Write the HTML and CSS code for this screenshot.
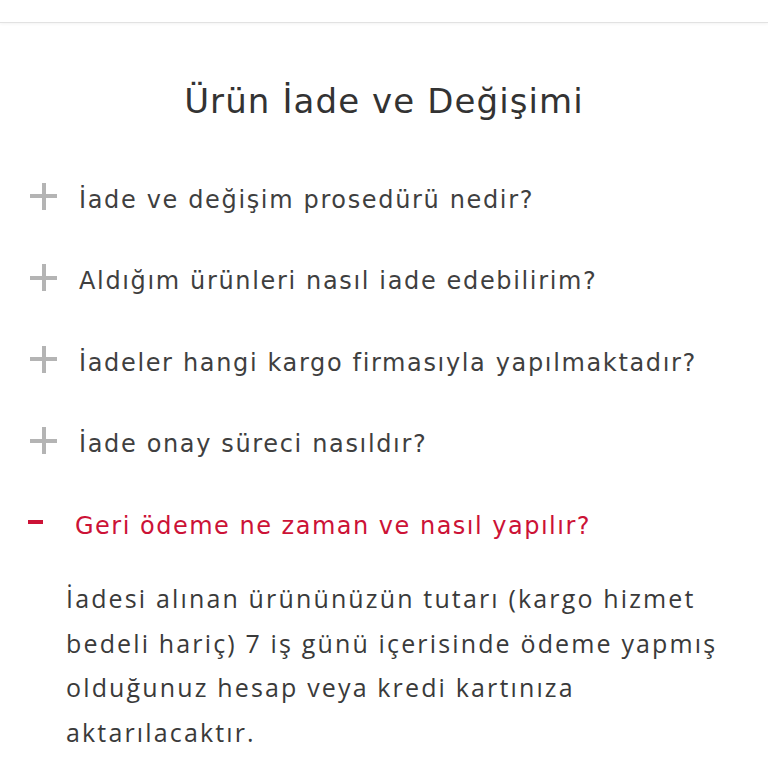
FILE: index.html
```html
<!DOCTYPE html>
<html lang="tr">
<head>
<meta charset="utf-8">
<title>Ürün İade ve Değişimi</title>
<link rel="stylesheet" href="styles.css">
</head>
<body>
<header class="topbar"></header>
<main class="faq">
  <h1 class="faq-title">Ürün İade ve Değişimi</h1>
  <ul class="faq-list">
    <li class="faq-item">
      <div class="q"><span class="icon plus"></span><span class="q-text">İade ve değişim prosedürü nedir?</span></div>
    </li>
    <li class="faq-item">
      <div class="q"><span class="icon plus"></span><span class="q-text">Aldığım ürünleri nasıl iade edebilirim?</span></div>
    </li>
    <li class="faq-item">
      <div class="q"><span class="icon plus"></span><span class="q-text">İadeler hangi kargo firmasıyla yapılmaktadır?</span></div>
    </li>
    <li class="faq-item">
      <div class="q"><span class="icon plus"></span><span class="q-text">İade onay süreci nasıldır?</span></div>
    </li>
    <li class="faq-item is-open">
      <div class="q"><span class="icon minus"></span><span class="q-text">Geri ödeme ne zaman ve nasıl yapılır?</span></div>
      <p class="answer">İadesi alınan ürününüzün tutarı (kargo hizmet bedeli hariç) 7 iş günü içerisinde ödeme yapmış olduğunuz hesap veya kredi kartınıza aktarılacaktır.</p>
    </li>
  </ul>
</main>
</body>
</html>
```
FILE: styles.css
```css
* { box-sizing: border-box; }
html, body { margin: 0; padding: 0; background: #ffffff; }
body { font-family: "DejaVu Sans", sans-serif; color: #3b3b3b; }

.topbar {
  height: 23px;
  border-bottom: 1px solid #e2e2e2;
  box-shadow: 0 1px 3px rgba(0, 0, 0, 0.05);
}

.faq { display: flex; flex-direction: column; }

.faq-title {
  margin: 58px 0 0;
  font-family: "DejaVu Sans", sans-serif;
  font-weight: 400;
  font-size: 34px;
  line-height: 40px;
  letter-spacing: 1.1px;
  color: #333333;
  text-align: center;
}

.faq-list {
  list-style: none;
  margin: 61.7px 0 0;
  padding: 0;
  display: flex;
  flex-direction: column;
  gap: 47.5px;
}

.q {
  display: flex;
  align-items: center;
  gap: 22px;
  padding-left: 30px;
  height: 34px;
}

.q-text {
  font-size: 24px;
  line-height: 34px;
  letter-spacing: 1.65px;
  color: #3f3f3f;
  white-space: nowrap;
}

.icon {
  position: relative;
  flex: 0 0 27px;
  width: 27px;
  height: 27px;
  margin-bottom: 7px;
}

.plus::before,
.plus::after {
  content: "";
  position: absolute;
  background: #b4b4b4;
}
.plus::before { left: 0; right: 0; top: 11.5px; height: 4px; }
.plus::after { top: 0; bottom: 0; left: 11.5px; width: 4px; }

.minus::before {
  content: "";
  position: absolute;
  left: -2px;
  width: 15px;
  top: 11.5px;
  height: 4px;
  background: #cc1236;
}

.is-open .q { gap: 18px; }
.is-open .q-text { color: #cc1236; letter-spacing: 1.5px; }

.answer {
  margin: 33.7px 0 0;
  padding: 0 28px 0 66px;
  font-family: "Open Sans", sans-serif;
  font-size: 25px;
  line-height: 44.5px;
  letter-spacing: 2.15px;
  color: #3a3a3a;
}
```
